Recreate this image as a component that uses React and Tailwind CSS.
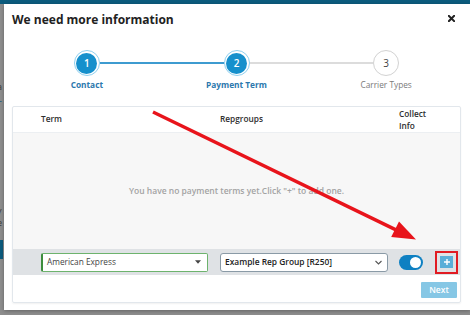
import React from "react";

const font = { fontFamily: '"Open Sans", "Noto Sans", sans-serif' };

function Step({ n, label, state, left, right }) {
  const active = state !== "todo";
  return (
    <div className="flex flex-col items-center">
      <div className="flex items-center w-full">
        <div className={`flex-1 h-[2px] ${left || "bg-transparent"}`} />
        {active ? (
          <div className="w-[26px] h-[26px] rounded-full border border-[#8ecfee] bg-white flex items-center justify-center">
            <div className="w-[21px] h-[21px] rounded-full bg-[#1690cc] flex items-center justify-center text-white text-[10px] font-semibold leading-none">
              {n}
            </div>
          </div>
        ) : (
          <div className="w-[26px] h-[26px] rounded-full border border-[#d2d2d2] bg-white flex items-center justify-center text-[#444] text-[10px] leading-none">
            {n}
          </div>
        )}
        <div className={`flex-1 h-[2px] ${right || "bg-transparent"}`} />
      </div>
      <div
        className={`mt-[3px] text-[8.3px] leading-[11px] ${
          active ? "text-[#2b78ad] font-bold" : "text-[#7a7a7a]"
        }`}
      >
        {label}
      </div>
    </div>
  );
}

export default function App() {
  return (
    <div className="relative w-[470px] h-[315px] overflow-hidden bg-[#8e8e8e]" style={font}>
      <div className="h-[4px] bg-[#0c5c7e]" />
      <div className="flex h-[311px]">
        <div className="w-[3px] flex flex-col text-[9px] leading-[12px] text-[#3a3a3a] overflow-hidden">
          <div className="h-[77px]" />
          <div className="-ml-[3px]">a</div>
          <div className="-ml-[3px] text-[#1d5d80]">L</div>
          <div className="h-[100px]" />
          <div className="-ml-[3px]">y</div>
          <div className="-ml-[3px]">e</div>
          <div className="h-[11px]" />
          <div className="h-[19px] bg-[#0c5c7e]" />
        </div>
        <div className="flex-1 ml-[1px] bg-white h-[306px] flex flex-col pl-[8px] pr-[5px] shadow-[0_1px_4px_rgba(0,0,0,0.3)]">
          <div className="flex items-center justify-between h-[32px] pr-[10px]">
            <div className="text-[12px] font-bold text-[#222]">We need more information</div>
            <svg width="7" height="7" viewBox="0 0 8 8" className="mt-[-3px]">
              <path d="M1 1 L7 7 M7 1 L1 7" stroke="#222" strokeWidth="2.4" strokeLinecap="square" />
            </svg>
          </div>
          <div className="grid grid-cols-3 w-[449px] mt-[14px]">
            <Step n="1" label="Contact" state="done" right="bg-[#3d9bd0]" />
            <Step n="2" label="Payment Term" state="active" left="bg-[#3d9bd0]" right="bg-[#dcdcdc]" />
            <Step n="3" label="Carrier Types" state="todo" left="bg-[#dcdcdc]" />
          </div>
          <div className="mt-[16px] w-[449px] h-[197px] border border-[#e2e7ec] rounded-[2px] flex flex-col shadow-[0_1px_2px_rgba(0,0,0,0.06)]">
            <div className="h-[26px] flex items-center pl-[28px] text-[8.3px] font-semibold text-[#2e2e2e] border-b border-[#eceff2]">
              <div className="w-[179px]">Term</div>
              <div className="w-[179px]">Repgroups</div>
              <div className="leading-[12px]">
                Collect
                <br />
                Info
              </div>
            </div>
            <div className="h-[116px] bg-[#f7f7f7] flex items-center justify-center text-[8.5px] font-semibold text-[#a3a3a3]">
              You have no payment terms yet.Click "+" to add one.
            </div>
            <div className="h-[26px] bg-[#dfe2e5] flex items-center pl-[28px]">
              <div className="w-[167px] h-[19px] bg-white border border-[#6db36d] border-l-[2px] border-l-[#3d8d3d] rounded-[2px] flex items-center justify-between pl-[4px] pr-[6px]">
                <span className="text-[8.3px] text-[#444]">American Express</span>
                <svg width="6" height="4" viewBox="0 0 7 4">
                  <path d="M0 0 L7 0 L3.5 4 Z" fill="#444" />
                </svg>
              </div>
              <div className="ml-[12px] w-[168px] h-[19px] bg-white border border-[#8a9aa6] rounded-[3px] flex items-center justify-between pl-[4px] pr-[5px]">
                <span className="text-[8.4px] font-semibold text-[#222]">Example Rep Group [R250]</span>
                <svg width="7" height="5" viewBox="0 0 7 5">
                  <path d="M0.5 1 L3.5 4 L6.5 1" stroke="#555" strokeWidth="1.1" fill="none" />
                </svg>
              </div>
              <div className="ml-[11px] w-[24px] h-[15px] rounded-full bg-[#0e80c2] flex items-center justify-end pr-[2px]">
                <div className="w-[11px] h-[11px] rounded-full bg-white" />
              </div>
              <div className="ml-[12px] relative w-[23px] h-[23px] border-2 border-[#e11b22] flex items-center justify-center">
                <div className="w-[13px] h-[12px] bg-[#5aaed8] flex items-center justify-center">
                  <svg width="6" height="6" viewBox="0 0 6 6">
                    <path d="M3 0 V6 M0 3 H6" stroke="#fff" strokeWidth="1.4" />
                  </svg>
                </div>
              </div>
            </div>
            <div className="flex-1 flex items-start justify-end pr-[3px] pt-[7px]">
              <div className="w-[36px] h-[16px] bg-[#86c7e5] text-white text-[8.5px] font-semibold flex items-center justify-center rounded-[1px]">
                Next
              </div>
            </div>
          </div>
        </div>
      </div>
      <svg className="absolute left-0 top-0 pointer-events-none" width="470" height="315" viewBox="0 0 470 315">
        <line x1="153" y1="112" x2="397" y2="230.4" stroke="#e8141b" strokeWidth="3.4" />
        <polygon points="416,239.5 391.2,237 399,221.5" fill="#e8141b" />
      </svg>
    </div>
  );
}
